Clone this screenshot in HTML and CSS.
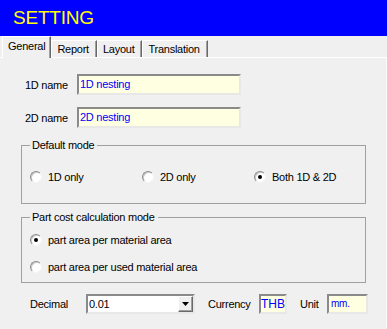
FILE: index.html
```html
<!DOCTYPE html>
<html>
<head>
<meta charset="utf-8">
<link rel="stylesheet" href="styles.css">
</head>
<body>
<div class="header">SETTING</div>
<div class="tabs">
  <div class="tab active">General</div>
  <div class="tab">Report</div>
  <div class="tab">Layout</div>
  <div class="tab">Translation</div>
</div>
<div class="panel">
  <div class="field">
    <span class="flabel">1D name</span>
    <div class="input name">1D nesting</div>
  </div>
  <div class="field second">
    <span class="flabel">2D name</span>
    <div class="input name">2D nesting</div>
  </div>
  <div class="group mode">
    <span class="legend">Default mode</span>
    <div class="radios three">
      <div class="opt"><span class="radio"></span><span class="otext">1D only</span></div>
      <div class="opt"><span class="radio"></span><span class="otext">2D only</span></div>
      <div class="opt"><span class="radio checked"></span><span class="otext">Both 1D &amp; 2D</span></div>
    </div>
  </div>
  <div class="group cost">
    <span class="legend">Part cost calculation mode</span>
    <div class="opt"><span class="radio checked"></span><span class="otext">part area per material area</span></div>
    <div class="opt second-opt"><span class="radio"></span><span class="otext">part area per used material area</span></div>
  </div>
  <div class="bottom">
    <span class="blabel decimal">Decimal</span>
    <div class="select">
      <span class="selval">0.01</span>
      <span class="dropbtn"><svg width="7" height="4" viewBox="0 0 7 4"><path d="M0 0H7L3.5 4Z" fill="#000"/></svg></span>
    </div>
    <span class="blabel currency">Currency</span>
    <div class="input small thb">THB</div>
    <span class="blabel unit">Unit</span>
    <div class="input small mm">mm.</div>
  </div>
</div>
</body>
</html>
```
FILE: styles.css
```css
html, body {
  margin: 0;
  padding: 0;
}
body {
  width: 387px;
  height: 329px;
  background: #f0f0f0;
  font-family: "Liberation Sans", Arial, sans-serif;
  font-size: 11px;
  letter-spacing: -0.25px;
  color: #000;
  overflow: hidden;
}
.header {
  height: 36px;
  background: #0000ff;
  color: #ffff00;
  font-size: 19px;
  letter-spacing: -0.2px;
  line-height: 36px;
  padding-left: 13px;
  box-sizing: border-box;
}
.tabs {
  display: flex;
  align-items: flex-end;
  height: 21px;
  padding-left: 2px;
  position: relative;
  z-index: 1;
}
.tab {
  height: 17px;
  line-height: 16px;
  box-sizing: border-box;
  padding: 0 7px 0 5px;
  border-top: 1px solid #fff;
  border-left: 1px solid #fff;
  border-right: 1px solid #696969;
  box-shadow: inset -1px 0 0 #a0a0a0;
  background: #f0f0f0;
}
.tab.active {
  height: 22px;
  line-height: 18px;
  margin-bottom: -1px;
  padding: 0 5px 0 5px;
}
.panel {
  border-top: 1px solid #fff;
  border-right: 1px solid #fafafa;
  height: 271px;
  box-sizing: border-box;
  padding-top: 16px;
}
.field {
  display: flex;
  align-items: center;
  padding-left: 25px;
}
.field.second {
  margin-top: 12px;
}
.flabel {
  width: 52px;
}
.input {
  box-sizing: border-box;
  background: #ffffe1;
  border: 2px solid;
  border-color: #8a8a8a #e8e8e8 #e8e8e8 #8a8a8a;
  color: #0000ff;
}
.input.name {
  width: 164px;
  height: 21px;
  line-height: 16px;
  padding-left: 1px;
  font-size: 11px;
}
.group {
  position: relative;
  margin: 0 20px 0 21px;
  border: 1px solid #a0a0a0;
}
.legend {
  position: absolute;
  top: -7px;
  left: 8px;
  padding: 0 3px 0 2px;
  background: #f0f0f0;
  line-height: 13px;
}
.group.mode {
  margin-top: 17px;
  padding: 24px 0 20px 8px;
}
.group.cost {
  margin-top: 13px;
  padding: 15px 0 9px 8px;
}
.radios.three {
  display: grid;
  grid-template-columns: 112px 112px 112px;
}
.opt {
  display: flex;
  align-items: center;
  height: 13px;
}
.second-opt {
  margin-top: 14px;
}
.radio {
  width: 12px;
  height: 12px;
  box-sizing: border-box;
  border-radius: 50%;
  border: 1px solid;
  border-color: #8c8c8c #f4f4f4 #f4f4f4 #8c8c8c;
  background: #fff;
  box-shadow: inset 1px 1px 0 #c8c8c8;
  position: relative;
  flex: none;
}
.radio.checked::after {
  content: "";
  position: absolute;
  left: 3px;
  top: 3px;
  width: 4px;
  height: 4px;
  border-radius: 50%;
  background: #000;
}
.otext {
  margin-left: 6px;
}
.bottom {
  display: flex;
  align-items: center;
  margin-top: 11px;
  padding-left: 30px;
}
.blabel.decimal {
  width: 56px;
}
.select {
  width: 109px;
  height: 20px;
  box-sizing: border-box;
  border: 2px solid;
  border-color: #8a8a8a #e8e8e8 #e8e8e8 #8a8a8a;
  background: #fff;
  display: flex;
  align-items: center;
  justify-content: space-between;
  padding-left: 1px;
}
.dropbtn {
  width: 15px;
  height: 16px;
  box-sizing: border-box;
  border: 1px solid;
  border-color: #fff #696969 #696969 #fff;
  box-shadow: inset -1px -1px 0 #a0a0a0;
  background: #f0f0f0;
  display: flex;
  align-items: center;
  justify-content: center;
}
.blabel.currency {
  margin-left: 13px;
  width: 51px;
}
.input.small {
  height: 20px;
  line-height: 16px;
}
.input.thb {
  width: 28px;
  font-size: 12px;
  letter-spacing: 0;
  text-align: center;
}
.blabel.unit {
  margin-left: 13px;
  width: 27px;
}
.input.mm {
  width: 41px;
  font-size: 10px;
  padding-left: 2px;
}
```
